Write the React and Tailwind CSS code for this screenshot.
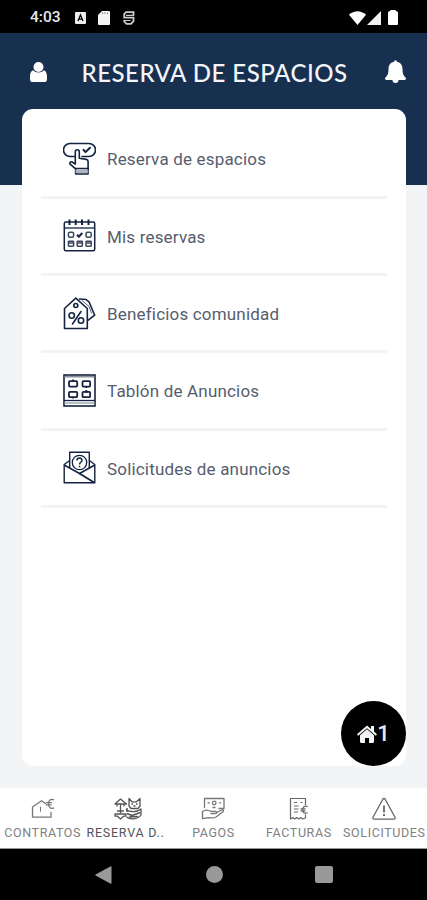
import React from 'react';

const NAVY = '#14233f';

function ReserveIcon() {
  return (
    <svg width="33" height="33" viewBox="0 0 33 33" fill="none" stroke={NAVY} strokeWidth="1.6" strokeLinejoin="round" strokeLinecap="round">
      <path d="M11.5 14.500H7a6.500 6.500 0 0 1 0-13h19A6.500 6.500 0 0 1 26 14.500h-7" />
      <path d="M20.500 7.800l2 2.300 4.500-4.300" strokeWidth="2" />
      <path d="M12.300 22V9.800a2 2 0 0 1 4 0v6.400l7 1.200a2.200 2.200 0 0 1 1.800 2.200V32H12.600v-5.200l-5.500-4.600c-.9-1.300.5-2.900 2-2.200z" />
      <path d="M12.600 26.500h12.500" />
      <path d="M13 28.500h11.700M13 30.200h11.700" stroke="#a5abb6" />
    </svg>
  );
}

function CalendarIcon() {
  return (
    <svg width="33" height="33" viewBox="0 0 33 33" fill="none" stroke={NAVY} strokeWidth="1.5" strokeLinejoin="round">
      <rect x="1.300" y="3" width="30.400" height="28.800" rx="1.500" />
      <path d="M1.300 9h30.400" strokeWidth="1.300" />
      <path d="M6.500.5v5.500M12.700.5v5.500M19 .5v5.500M25.500.5v5.500" strokeWidth="2" />
      <g strokeWidth="1.500" stroke="#3c475e">
        <rect x="5.400" y="13.300" width="5.200" height="5" rx="1.500" />
        <rect x="23" y="13.300" width="5.200" height="5" rx="1.500" />
        <rect x="5.400" y="22.200" width="5.200" height="5" rx=".6" />
        <rect x="14.200" y="22.200" width="5.200" height="5" rx=".6" />
        <rect x="23" y="22.200" width="5.200" height="5" rx=".6" />
        <path d="M5.800 24h4.500M14.500 24h4.500M23.300 24h4.500" />
      </g>
      <path d="M14 15.800l1.800 1.900 3.500-3.700" strokeWidth="2" />
    </svg>
  );
}

function TagsIcon() {
  return (
    <svg width="33" height="33" viewBox="0 0 33 33" fill="none" stroke={NAVY} strokeWidth="1.600" strokeLinejoin="round" strokeLinecap="round">
      <path d="M1.500 11.500L12.800 1.200 24.300 11.500V31.500H1.500z" />
      <path d="M16.500 2l6.500.500 3.200 2.700 5.500 13-6.500 5" />
      <path d="M19 3.500l7 6 2.500 6.500" strokeWidth="1" stroke="#59627a" />
      <circle cx="12.800" cy="8.500" r="2" />
      <path d="M18 14.500l-8.500 12.500" />
      <circle cx="8.700" cy="18.500" r="2.700" />
      <circle cx="18" cy="23.500" r="2.700" />
    </svg>
  );
}

function BoardIcon() {
  return (
    <svg width="33" height="33" viewBox="0 0 33 33" fill="none" stroke={NAVY} strokeWidth="1.600">
      <rect x="1" y="1" width="31" height="31" />
      <path d="M1 26.500h31" strokeWidth="1.300" />
      <path d="M1.500 29h30" strokeWidth="1.500" stroke="#a5abb6" />
      <path d="M1 2.800h31" strokeWidth="1.200" stroke="#6f7788" />
      <g strokeWidth="1.800">
        <rect x="6" y="7.200" width="8.200" height="5.400" rx="1" />
        <rect x="19.500" y="7.200" width="7.600" height="5.400" rx="1" />
        <rect x="6" y="17.800" width="8.200" height="5.400" rx="1" />
        <rect x="19.500" y="17.800" width="7.600" height="5.400" rx="1" />
        <path d="M10 5.500v2M23.300 12v2M10 23v1.500M23.300 16v3" />
      </g>
    </svg>
  );
}

function EnvelopeIcon() {
  return (
    <svg width="33" height="33" viewBox="0 0 33 33" fill="none" stroke={NAVY} strokeWidth="1.400" strokeLinejoin="round">
      <path d="M6.700 17.500V1.200h19.600v16.300" />
      <path d="M6.700 9.500L1.200 13.500v18.300h30.600V13.500l-5.500-4" />
      <path d="M1.200 14l15.300 8.500L31.800 14" strokeWidth="1.500" />
      <path d="M16.500 22.500l15 9.200" strokeWidth="1.800" />
      <circle cx="16.500" cy="11.500" r="7.200" strokeWidth="1.300" />
      <path d="M14 9.500c0-3.200 5-3.200 5-.2 0 2-2.500 1.900-2.500 4.100M16.500 14.800v1.500" strokeWidth="1.500" />
    </svg>
  );
}

function ContractIcon() {
  return (
    <svg width="24" height="24" viewBox="0 0 24 24" fill="none" stroke="#777" strokeWidth="1.300" strokeLinejoin="round">
      <path d="M15 7L10.500 3.800 1.500 10v10.200h18.500V15" />
      <path d="M23 2.800c-3.500-1.500-5.500.5-5.500 4s2 5.500 5.500 4M15 5.700h6M15 7.900h5.500" />
      <path d="M9.500 9.700v5" strokeWidth="1" />
    </svg>
  );
}

function SpacesIcon() {
  return (
    <svg width="28" height="24" viewBox="0 0 28 24" fill="none" stroke="#555" strokeWidth="1.300" strokeLinejoin="round">
      <path d="M1 7l5.500-5 6 5zM6.500 6.500v10M3 6.500v3M10 6.500v3" />
      <path d="M1 17h11v2.200H9.500L6.500 22 3.500 19.200H1zM3 14h7" />
      <path d="M15 9V1.500l3 3.300h4.500L26 1.500V9l-2 2.500h-7z" />
      <path d="M17.500 7h1.500M22 7h1.500M19.500 9h2" />
      <path d="M12 12.500c3 3 11 3 15-.5v6c-3 4.500-11 5-14.500 2" />
      <path d="M13 16.500l5 2 8.500-3M15 20l9-.5M13 11v4" strokeWidth="1.500" />
    </svg>
  );
}

function PaymentIcon() {
  return (
    <svg width="24" height="24" viewBox="0 0 24 24" fill="none" stroke="#777" strokeWidth="1.300" strokeLinejoin="round" strokeLinecap="round">
      <path d="M3.500 10.500V1.500H23v10h-5" />
      <circle cx="13.200" cy="6" r="1.800" />
      <path d="M7 5.800h1.500M18.500 5.800h1M12 10.500h2" />
      <path d="M1.500 14.500c3-2.200 5.500-1.900 8.500 0h4.500c1.500 0 1.500 2.200 0 2.200H10" />
      <path d="M15.500 15.700l5-2.700c1.700-.8 2.800.8 1.500 1.800l-7 5.200c-2.500 1.700-5 .8-7.500.6l-6 1v-7" />
    </svg>
  );
}

function InvoiceIcon() {
  return (
    <svg width="24" height="24" viewBox="0 0 24 24" fill="none" stroke="#666" strokeWidth="1.200" strokeLinejoin="round">
      <path d="M18.500 8V1.500h-15V22l2.200-1.500 2 1.500 2-1.500 2 1.500 2-1.500 2 1.500 2.800-1V17.500" />
      <path d="M7 5.500h3M7 9h4.500M7 12h4.500M7 15h4M13.500 5.500h2" />
      <path d="M20.800 9.500c-3.500-1.200-5.200.5-5.200 3.200s1.700 4.300 5.200 3.100M13.500 11.800h5M13.500 13.800h5" />
    </svg>
  );
}

function AlertIcon() {
  return (
    <svg width="24" height="24" viewBox="0 0 24 24" fill="none" stroke="#666" strokeWidth="1.300" strokeLinejoin="round">
      <path d="M10.800 2.200a1.400 1.400 0 0 1 2.400 0l9.800 18c.5.900-.1 2-1.200 2H2.200c-1.100 0-1.700-1.100-1.200-2z" />
      <path d="M12 8.500v7M12 17v2" strokeWidth="1.800" />
    </svg>
  );
}

const items = [
  { label: 'Reserva de espacios', Icon: ReserveIcon },
  { label: 'Mis reservas', Icon: CalendarIcon },
  { label: 'Beneficios comunidad', Icon: TagsIcon },
  { label: 'Tablón de Anuncios', Icon: BoardIcon },
  { label: 'Solicitudes de anuncios', Icon: EnvelopeIcon },
];

const tabs = [
  { label: 'CONTRATOS', Icon: ContractIcon },
  { label: 'RESERVA D..', Icon: SpacesIcon, active: true },
  { label: 'PAGOS', Icon: PaymentIcon },
  { label: 'FACTURAS', Icon: InvoiceIcon },
  { label: 'SOLICITUDES', Icon: AlertIcon },
];

function StatusBar() {
  return (
    <div className="h-[33px] bg-black flex items-center justify-between pl-[30px] pr-[29px] pt-[2px] text-white">
      <div className="flex items-center">
        <span className="w-[45px] text-[15.500px] leading-none font-medium text-[#e8e8e8]">4:03</span>
        <svg className="w-[11px] h-[12px]" viewBox="0 0 11 12">
          <rect width="11" height="12" rx="1" fill="#eee" />
          <path d="M3 9l2.500-6L8 9M4 7.200h3" fill="none" stroke="#000" strokeWidth="1.300" />
        </svg>
        <svg className="w-[12px] h-[14px] ml-[12px]" viewBox="0 0 12 14">
          <path d="M4 0h7a1 1 0 0 1 1 1v12a1 1 0 0 1-1 1H1a1 1 0 0 1-1-1V4z" fill="#f4f4f4" />
          <path d="M4.500 1.500v1.500M7 1.500v1.500M9.500 1.500v1.500" stroke="#777" />
        </svg>
        <svg className="w-[12px] h-[14px] ml-[13px]" viewBox="0 0 12 14" fill="none" stroke="#ccc" strokeWidth="1.800">
          <path d="M10.500 4.500V1.200H3L1.200 3v3.700h9.300v3.500L8 12.800H3.500L1.200 10.500V9" />
          <path d="M3 4.300h8M1 9.500h6.500" strokeWidth="1.200" />
        </svg>
      </div>
      <div className="flex items-center">
        <svg className="w-[17px] h-[14px]" viewBox="0 0 17 14" fill="#fff"><path d="M0 3.800C4.800-.9 12.200-.9 17 3.800L8.500 14z" /></svg>
        <svg className="w-[14px] h-[14px] ml-[1px]" viewBox="0 0 14 14" fill="#f0f0f0"><path d="M14 0v14H0z" /></svg>
        <svg className="w-[10px] h-[15px] ml-[7px]" viewBox="0 0 10 15" fill="#fff"><path d="M3 0h4l2 1.500a1 1 0 0 1 1 1V14a1 1 0 0 1-1 1H1a1 1 0 0 1-1-1V2.500a1 1 0 0 1 1-1z" /></svg>
      </div>
    </div>
  );
}

export default function App() {
  return (
    <div className="relative w-[427px] h-[900px] overflow-hidden flex flex-col bg-[#f2f4f6] font-['Roboto',sans-serif]">
      <StatusBar />

      {/* Header */}
      <header className="h-[152px] shrink-0 bg-[#18304f] flex items-start pl-[30px] pr-[21px]">
        <svg className="w-[17px] h-[20px] mt-[28.500px]" viewBox="0 0 17 20" fill="#fff">
          <circle cx="8.500" cy="5" r="5" />
          <path d="M3.200 8.300c2.500 3 8.100 3 10.600 0C16 9 17 11.500 17 14.500v2.700A2.800 2.800 0 0 1 14.200 20H2.800A2.800 2.800 0 0 1 0 17.200v-2.700C0 11.500 1 9 3.200 8.300z" />
        </svg>
        <h1 className="mt-[25px] ml-[34.500px] whitespace-nowrap font-['Lato',sans-serif] text-[24px] leading-[30px] font-medium tracking-[0.5px] text-[#f3f5f9]">
          RESERVA DE ESPACIOS
        </h1>
        <svg className="w-[21px] h-[23px] mt-[27px] ml-auto" viewBox="0 0 21 23" fill="#fff">
          <path d="M9 1.700a1.500 1.500 0 0 1 3 0c4 .8 5.500 4 5.500 7.300 0 5.500 1.500 7 3 8.500.9 1 .3 2.500-.8 2.500H13.500a3 3 0 0 1-6 0H1.300c-1.100 0-1.700-1.500-.8-2.500 1.500-1.500 3-3 3-8.500C3.500 5.700 5 2.500 9 1.700z" />
        </svg>
      </header>

      {/* Menu card */}
      <main className="relative z-10 -mt-[76px] mx-[21.500px] h-[657px] shrink-0 rounded-[11px] bg-white pt-[12.200px] px-[19px]">
        {items.map(({ label, Icon }) => (
          <div key={label} className="h-[77.400px] flex items-center pl-[22.500px] border-b-[3px] border-[#f3f3f4]">
            <Icon />
            <span className="ml-[11px] mt-[2.600px] text-[17px] leading-none whitespace-nowrap tracking-[0.18px] text-[#565d6e]">{label}</span>
          </div>
        ))}
      </main>

      <button className="absolute z-20 left-[341px] top-[701px] w-[65px] h-[65px] rounded-full bg-black flex items-center justify-center text-white">
        <svg className="w-[20px] h-[18px]" viewBox="0 0 20 18" fill="#f3f3f3">
          <path d="M10 4.200l7 6v6.600c0 .7-.4 1.200-1.200 1.200H12v-5H8v5H4.200c-.8 0-1.200-.5-1.200-1.200v-6.600z" />
          <path d="M10 .5l4 3.400V1h3v5.500l3 2.800-1.200 1.500L10 3.300 1.200 10.800 0 9.300z" />
        </svg>
        <span className="text-[22px] leading-none font-medium text-[#e8e8e8]">1</span>
      </button>

      {/* Bottom tabs */}
      <nav className="mt-[22px] h-[61px] shrink-0 bg-white border-b border-[#999] grid grid-cols-5">
        {tabs.map(({ label, Icon, active }) => (
          <div key={label} className="flex flex-col items-center pt-[9px]">
            <Icon />
            <span className={`mt-[5px] text-[12.500px] leading-[14px] whitespace-nowrap ${active ? 'mr-[5px] tracking-[0.75px] text-[#555]' : 'tracking-[0.6px] text-[#808080]'}`}>{label}</span>
          </div>
        ))}
      </nav>

      {/* Android navigation */}
      <footer className="h-[51px] shrink-0 bg-black flex items-center pl-[95px]">
        <svg className="w-[17px] h-[18px]" viewBox="0 0 17 18" fill="#999"><path d="M15.800.2Q16.500 0 16.500 1v16q0 1-.8.700L.5 9.500Q0 9 .5 8.500z" /></svg>
        <div className="ml-[94px] w-[17px] h-[17px] rounded-full bg-[#999]" />
        <div className="ml-[92px] w-[18px] h-[17px] rounded-[2px] bg-[#999]" />
      </footer>
    </div>
  );
}
